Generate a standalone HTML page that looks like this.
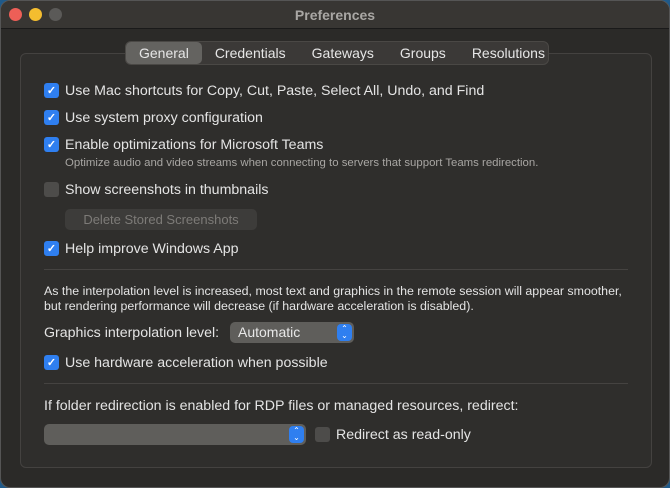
<!DOCTYPE html>
<html><head><style>
*{margin:0;padding:0;box-sizing:border-box}
body{width:670px;height:488px;background:#1f5a8a;font-family:"Liberation Sans",sans-serif;overflow:hidden;position:relative}
.win{position:absolute;left:0;top:0;width:670px;height:488px;background:#2b2a28;border-radius:10px;overflow:hidden;border:1px solid #555}
.title{height:28px;background:#383633;border-bottom:1px solid #1a1a1a;position:relative}
.title .t{position:absolute;width:100%;text-align:center;top:6px;color:#a9a7a4;font-weight:bold;font-size:14px}
.dot{position:absolute;top:7px;width:13px;height:13px;border-radius:50%}
.panel{position:absolute;left:19px;top:52px;width:632px;height:415px;border:1px solid #444240;border-radius:6px;background:#2f2e2c}
.tabs{position:absolute;left:124px;top:40px;height:24px;width:424px;background:#3b3937;border:1px solid #4a4845;border-radius:6px;display:flex;align-items:center;font-size:14px;color:#e6e6e6}
.tab{padding:0 13px;height:22px;line-height:22px}
.tab.sel{background:#646360;border-radius:5px}
.row{position:absolute;left:43px;font-size:14.2px;color:#e4e4e4;display:flex;align-items:center;white-space:nowrap}
.cb{width:15px;height:15px;border-radius:3px;background:#2f7ff0;margin-right:6px;display:flex;align-items:center;justify-content:center;color:#fff;font-size:11px;font-weight:bold;position:relative;top:-1px}
.cb.off{background:#4d4c4a}
.small{position:absolute;font-size:11.4px;color:#a8a6a3}
.txt{position:absolute;left:43px;font-size:12.4px;color:#e4e4e4;line-height:15px}
.hr{position:absolute;left:43px;width:584px;height:1px;background:#454341}
.btn{position:absolute;left:64px;top:208px;width:192px;height:21px;background:#3d3c3a;border-radius:5px;color:#7d7b78;font-size:13px;text-align:center;line-height:21px}
.pop{position:absolute;background:#5f5e5b;border-radius:5px;color:#e8e8e8;font-size:14px}
.arr{position:absolute;right:2px;top:2px;width:15px;height:17px;background:#2f7ff0;border-radius:4px;color:#fff;font-size:8px;line-height:7px;text-align:center;padding-top:1px}
</style></head><body><div class="win">
<div class="title"><div class="dot" style="left:8px;background:#ed5f57"></div><div class="dot" style="left:28px;background:#f4bd2f"></div><div class="dot" style="left:48px;background:#5b5a58"></div><div class="t">Preferences</div></div>
<div class="panel"></div>
<div class="tabs"><div class="tab sel">General</div><div class="tab">Credentials</div><div class="tab">Gateways</div><div class="tab">Groups</div><div class="tab">Resolutions</div></div>
<div class="row" style="top:82px"><div class="cb">✓</div>Use Mac shortcuts for Copy, Cut, Paste, Select All, Undo, and Find</div>
<div class="row" style="top:109px"><div class="cb">✓</div>Use system proxy configuration</div>
<div class="row" style="top:136px"><div class="cb">✓</div>Enable optimizations for Microsoft Teams</div>
<div class="small" style="left:64px;top:156px">Optimize audio and video streams when connecting to servers that support Teams redirection.</div>
<div class="row" style="top:181px"><div class="cb off"></div>Show screenshots in thumbnails</div>
<div class="btn">Delete Stored Screenshots</div>
<div class="row" style="top:240px"><div class="cb">✓</div>Help improve Windows App</div>
<div class="hr" style="top:268px"></div>
<div class="txt" style="top:283px">As the interpolation level is increased, most text and graphics in the remote session will appear smoother,<br>but rendering performance will decrease (if hardware acceleration is disabled).</div>
<div class="row" style="top:324px">Graphics interpolation level:</div>
<div class="pop" style="left:229px;top:321px;width:124px;height:21px;padding-left:8px;line-height:21px">Automatic<div class="arr">⌃<br>⌄</div></div>
<div class="row" style="top:354px"><div class="cb">✓</div>Use hardware acceleration when possible</div>
<div class="hr" style="top:382px"></div>
<div class="row" style="top:397px">If folder redirection is enabled for RDP files or managed resources, redirect:</div>
<div class="pop" style="left:43px;top:423px;width:262px;height:21px"><div class="arr">⌃<br>⌄</div></div>
<div class="row" style="left:314px;top:426px"><div class="cb off"></div>Redirect as read-only</div>
</div></body></html>
